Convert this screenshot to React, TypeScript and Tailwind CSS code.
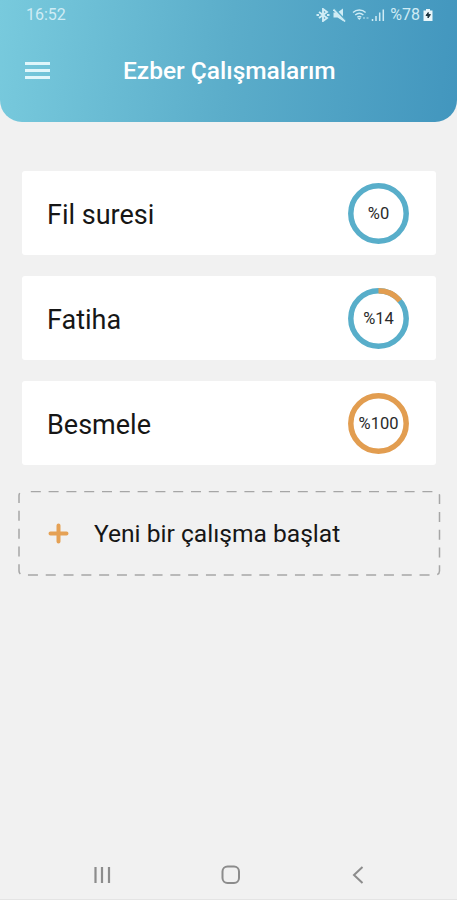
const studies = [
  { name: 'Fil suresi', percent: 0 },
  { name: 'Fatiha', percent: 14 },
  { name: 'Besmele', percent: 100 },
]

function StatusBar() {
  return (
    <div className="flex h-[29px] items-center justify-between pl-[26px] pr-[24px] text-[16px] leading-7 text-[#cfecf5]">
      <span>16:52</span>
      <div className="flex items-center">
        {/* Bluetooth */}
        <svg width="14" height="14" viewBox="0 0 14 14" fill="none" stroke="currentColor" strokeWidth="1.900">
          <path d="M3 4l8 6-4 3V1l4 3-8 6" />
          <path d="M.5 7H3M11 7h2.500" />
        </svg>
        {/* Muted */}
        <svg className="ml-[3px]" width="13" height="14" viewBox="0 0 13 14" fill="currentColor">
          <path d="M.5 4.500h4l5.500-4v12.500l-5.500-3.500h-4z" />
          <path d="M1 .5l11.500 12" stroke="#55aac9" strokeWidth="2.200" />
          <path d="M.5 1.500l11.500 12" stroke="currentColor" strokeWidth="1.700" />
        </svg>
        {/* Wi-Fi */}
        <svg className="ml-[6px]" width="18" height="14" viewBox="0 0 18 14" fill="none" stroke="currentColor" strokeWidth="1.400">
          <path d="M1 4.400c3.400-3.200 9.200-3.200 12.600 0M3.200 7c2.400-2 5.800-2 8.200 0M5.300 9.300c1.200-.9 2.800-.9 4 0" />
          <path d="M5.500 10h3.600l-1.800 2z" fill="currentColor" stroke="none" />
          <path d="M11 10h2M14.500 10H16.500" opacity=".6" />
        </svg>
        {/* Signal */}
        <svg className="ml-px" width="14" height="14" viewBox="0 0 14 14" stroke="currentColor" strokeWidth="1.500">
          <path d="M1.500 11v2M5 8v5M8.700 4.500V13M12.300 1.500V13" />
        </svg>
        <span className="ml-[5px]">%78</span>
        {/* Battery */}
        <svg className="ml-[3px]" width="10" height="14" viewBox="0 0 10 14">
          <path d="M3 1h4v1.500h2.500V13H.5V2.500H3z" fill="#e8f6fa" />
          <path d="M5.200 4.500L3 7.500h2V10l2.400-3.400H5.200z" fill="#1d3540" stroke="#1d3540" strokeWidth="1" />
        </svg>
      </div>
    </div>
  )
}

function ProgressRing({ percent }: { percent: number }) {
  return (
    <div className="relative flex size-[61px] items-center justify-center">
      <svg className="absolute inset-0 -rotate-90" width="61" height="61" viewBox="0 0 61 61" fill="none" strokeWidth="5.500">
        {percent < 100 && <circle cx="30.500" cy="30.500" r="27.700" stroke="#58aeca" />}
        {percent > 0 && (
          <circle cx="30.500" cy="30.500" r="27.700" stroke="#e29d50" pathLength="100" strokeDasharray={`${percent} 100`} />
        )}
      </svg>
      <span className="mt-[3px] text-[16.500px] leading-none text-[#2a2a2a]">%{percent}</span>
    </div>
  )
}

export default function App() {
  return (
    <div className="flex h-[900px] w-[457px] flex-col overflow-hidden border-b border-[#e4e4e4] bg-[#f1f1f1] font-['Roboto',sans-serif]">
      <header className="h-[122px] rounded-b-[22px] bg-linear-[96deg,#78cadd,#5badca_50%,#4296be]">
        <StatusBar />
        <div className="flex h-[83px] items-center pl-[25px]">
          <div className="flex w-[98px] flex-col gap-[4px]">
            <span className="h-[3px] w-[25px] bg-[#e0f6fb]" />
            <span className="h-[3px] w-[25px] bg-[#e0f6fb]" />
            <span className="h-[3px] w-[25px] bg-[#e0f6fb]" />
          </div>
          <h1 className="mt-[2px] whitespace-nowrap text-[24.500px] font-medium text-white">Ezber Çalışmalarım</h1>
        </div>
      </header>

      <main className="flex-1 pt-[49px]">
        <div className="flex flex-col gap-[21px] pl-[22px] pr-[21px]">
          {studies.map((study) => (
            <div key={study.name} className="flex h-[84px] items-center justify-between rounded-[3px] bg-white pl-[25px] pr-[27px]">
              <span className="mt-[4px] text-[27px] text-[#161616]">{study.name}</span>
              <ProgressRing percent={study.percent} />
            </div>
          ))}
        </div>

        {/* New study */}
        <button className="relative ml-[18px] mt-[26px] flex h-[85px] w-[423px] items-center pl-[30px] text-left">
          <svg className="absolute inset-0" width="423" height="85" viewBox="0 0 423 85" fill="none">
            <rect x="1" y=".5" width="420.500" height="83.500" rx="4" stroke="#a6a6a6" strokeWidth="1.500" strokeDasharray="10 7.800" strokeDashoffset="10" />
          </svg>
          <svg width="21" height="21" viewBox="0 0 21 21" stroke="#e5a155" strokeWidth="4" strokeLinecap="round">
            <path d="M10.500 2.500v16M2.500 10.500h16" />
          </svg>
          <span className="ml-[25px] mt-[2px] whitespace-nowrap text-[24.600px] text-[#161616]">Yeni bir çalışma başlat</span>
        </button>
      </main>

      {/* Navigation bar */}
      <nav className="flex h-[50px] items-center justify-between px-[93px] pt-px">
        <svg width="18" height="18" viewBox="0 0 18 18" stroke="#8c8c8c" strokeWidth="2.200">
          <path d="M2.500 1v16M9 1v16M16 1v16" />
        </svg>
        <svg className="-ml-[2px]" width="20" height="20" viewBox="0 0 20 20" fill="none" stroke="#8c8c8c" strokeWidth="2">
          <rect x="1.500" y="1.500" width="16.500" height="16.500" rx="5" />
        </svg>
        <svg width="12" height="18" viewBox="0 0 12 18" fill="none" stroke="#8c8c8c" strokeWidth="2">
          <path d="M10.500 1L2 9l8.500 8" />
        </svg>
      </nav>
    </div>
  )
}
